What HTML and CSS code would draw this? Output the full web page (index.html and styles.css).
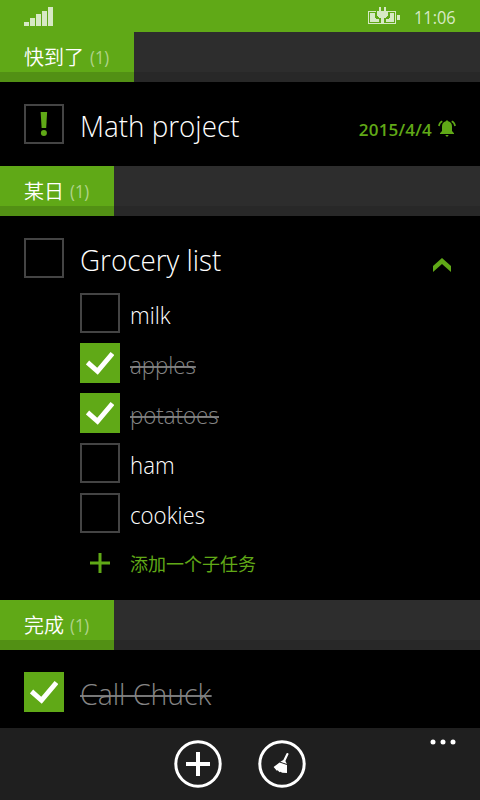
FILE: index.html
```
<!DOCTYPE html>
<html lang="zh-CN">
<head>
<meta charset="utf-8">
<title>Tasks</title>
<link rel="stylesheet" href="styles.css">
</head>
<body>
<div class="phone">
  <header class="status">
    <svg class="signal" width="29" height="19" viewBox="0 0 29 19"><path d="M0 15h5v4H0zM6 11h5v8H6zM12 7h5v12h-5zM18 4h5v15h-5zM24 0h5v19h-5z"/></svg>
    <svg class="battery" width="32" height="17" viewBox="0 0 32 17" shape-rendering="crispEdges"><path d="M0 4h8v1H1v11h12v1H0zM20 4h8v13H15v-1h12V5h-7zM29 8h3v5h-3zM2 6h5v5h1v1h3v3H2zM22 6h4v9h-8v-3h3v-1h1zM11 0h2v4h3V0h2v4h2v5h-1v1h-1v1h-2v6h-3v-6h-2v-1h-1V9H9V4h2z"/></svg>
    <span class="clock">11:06</span>
  </header>

  <div class="section"><h2 class="tab tab-wide"><span class="name">快到了</span><span class="count">(1)</span></h2></div>
  <div class="task task-due">
    <span class="box"><svg width="8" height="24" viewBox="0 0 8 24"><path d="M.6 0h6.500L6.200 16H1.600z"/><circle cx="3.900" cy="21" r="3"/></svg></span>
    <span class="title">Math project</span>
    <span class="date">2015/4/4</span>
    <svg class="bell" width="18" height="17" viewBox="0 0 18 17"><path d="M9 0l1.200 1.200C13 2 14 4 14 6.500V11l2 2.300v.7H2v-.7L4 11V6.500C4 4 5 2 7.800 1.200zM7.200 15h3.600L9 17z"/><path class="wave" d="M4.300 1.300Q1.500 2.500.9 6M13.700 1.300Q16.500 2.500 17.100 6"/></svg>
  </div>

  <div class="section"><h2 class="tab"><span class="name">某日</span><span class="count">(1)</span></h2></div>
  <div class="group">
    <div class="task">
      <span class="box"></span>
      <span class="title">Grocery list</span>
      <svg class="chevron" width="18" height="14" viewBox="0 0 18 14"><path d="M0 8l9-8 9 8v6L9 6l-9 8z"/></svg>
    </div>
    <ul class="subtasks">
      <li><span class="box"></span><span class="label">milk</span></li>
      <li><span class="box checked"><svg width="28" height="24" viewBox="0 0 28 24"><path d="M1.500 11.500l10 8.800L26.500 2.500"/></svg></span><span class="label done">apples</span></li>
      <li><span class="box checked"><svg width="28" height="24" viewBox="0 0 28 24"><path d="M1.500 11.500l10 8.800L26.500 2.500"/></svg></span><span class="label done">potatoes</span></li>
      <li><span class="box"></span><span class="label">ham</span></li>
      <li><span class="box"></span><span class="label">cookies</span></li>
    </ul>
    <div class="add">
      <svg width="20" height="20" viewBox="0 0 20 20"><path d="M8.500 0h3v8.500H20v3h-8.500V20h-3v-8.500H0v-3h8.500z"/></svg>
      <span>添加一个子任务</span>
    </div>
  </div>

  <div class="section"><h2 class="tab"><span class="name">完成</span><span class="count">(1)</span></h2></div>
  <div class="task task-done">
    <span class="box checked"><svg width="28" height="24" viewBox="0 0 28 24"><path d="M1.500 11.500l10 8.800L26.500 2.500"/></svg></span>
    <span class="title done finished">Call Chuck</span>
  </div>

  <footer class="appbar">
    <svg class="round" width="48" height="48" viewBox="0 0 48 48"><circle cx="24" cy="24" r="22.200"/><path d="M22 12h4v10h10v4H26v10h-4V26H12v-4h10z"/></svg>
    <svg class="round" width="48" height="48" viewBox="0 0 48 48"><circle cx="24" cy="24" r="22.200"/><path d="M28.600 13.200q1.500-.8 2 .7l-3.200 7.200 1.500 2.900-6.600-2.300 3-1.700zM21.600 22.500l7.400 2.600V33l-4.700-.3-2-1-.7.600-2-2-.8.400L15.600 27z"/></svg>
    <svg class="more" width="26" height="6" viewBox="0 0 26 6"><circle cx="3" cy="3" r="2.500"/><circle cx="13" cy="3" r="2.500"/><circle cx="23" cy="3" r="2.500"/></svg>
  </footer>
</div>
</body>
</html>
```
FILE: styles.css
```
* { box-sizing: border-box; }
body { margin: 0; background: #000; }
svg { display: block; flex: none; }
.phone {
  width: 480px; height: 800px; overflow: hidden;
  background: #000; color: #fff;
  font-family: "Open Sans", "Noto Sans CJK SC", sans-serif;
  font-weight: 300;
}
.status { height: 32px; background: #60a917; display: flex; align-items: flex-start; padding: 7px 24px 0; fill: #d7e9c5; }
.battery { margin-left: auto; }
.clock { width: 42px; margin-left: 14px; font: 400 19px/20px "Open Sans", sans-serif; color: #d7e9c5; transform: scaleX(.86); transform-origin: left; white-space: nowrap; }
.section { height: 50px; background: linear-gradient(#2d2d2d 40px, #282828 40px); }
.tab {
  margin: 0; width: 114px; height: 50px; padding-left: 24px;
  display: flex; background: linear-gradient(#60a917 40px, #529014 40px);
  font-size: 20px; line-height: 50px; font-weight: 400; white-space: nowrap;
}
.tab-wide { width: 134px; }
.name { font-family: "Noto Sans CJK SC", sans-serif; font-weight: 350; }
.count { margin-left: 6px; font-size: 19px; color: #b0d48b; transform: scaleX(.87); transform-origin: left; }
.task { display: flex; padding: 22px 24px 0; align-items: flex-start; }
.task-due { height: 84px; }
.task-done { height: 78px; }
.box { width: 40px; height: 40px; flex: none; border: 2px solid #444; display: flex; align-items: center; justify-content: center; }
.box path, .box circle { fill: #60a917; }
.checked { border: 0; background: #60a917; }
.box.checked path { fill: none; stroke: #fff; stroke-width: 5; }
.title { margin-left: 16px; font-size: 30px; line-height: 44px; white-space: nowrap; transform: scaleX(.927); transform-origin: left; }
.finished { transform: scaleX(.947); }
.date { margin-left: auto; font-size: 17px; line-height: 24px; margin-top: 14px; font-weight: 600; color: #60a917; letter-spacing: .2px; white-space: nowrap; }
.bell { margin: 16px 0 0 6px; fill: #60a917; }
.bell .wave { fill: none; stroke: #60a917; stroke-width: 1.6; }
.chevron { margin: 20px 5px 0 auto; fill: #60a917; }
.group { height: 384px; }
.subtasks { list-style: none; margin: 0; padding: 11px 0 0 80px; display: grid; gap: 10px; }
.subtasks li { display: flex; height: 40px; }
.label { margin-left: 10px; font-size: 24px; line-height: 43px; white-space: nowrap; transform: scaleX(.927); transform-origin: left; }
.done { color: #858585; background: linear-gradient(#777, #777) 0 23px / 100% 2px no-repeat; }
.add { display: flex; align-items: center; margin-top: 20px; padding-left: 90px; height: 20px; gap: 20px; fill: #60a917; color: #60a917; font: 400 18px/20px "Noto Sans CJK SC", sans-serif; }
.appbar { height: 72px; background: #1f1f1f; position: relative; display: flex; justify-content: center; gap: 36px; padding-top: 12px; fill: #fff; }
.round circle { fill: none; stroke: #fff; stroke-width: 3; }
.more { position: absolute; right: 24px; top: 11px; }
```
